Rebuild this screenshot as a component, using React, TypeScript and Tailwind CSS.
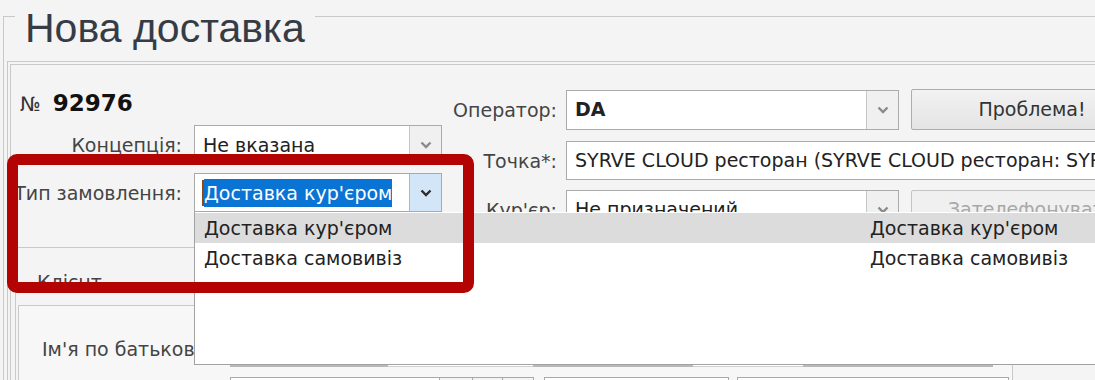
import React from "react";

function Chevron({ dark }: { dark?: boolean }) {
  return (
    <svg width="12" height="8" viewBox="0 0 12 8">
      <path
        d="M1.5 1.5 L6 6 L10.5 1.5"
        fill="none"
        stroke={dark ? "#2b2b2b" : "#8a8a8a"}
        strokeWidth="2.4"
      />
    </svg>
  );
}

function DropBtn({ focused }: { focused?: boolean }) {
  return (
    <div
      className={`w-[32px] shrink-0 border-l flex items-center justify-center ${
        focused ? "bg-[#d3e6f8] border-[#9fb8d3]" : "bg-[#f0f0f0] border-[#c6c6c6]"
      }`}
    >
      <Chevron dark={focused} />
    </div>
  );
}

export default function App() {
  const items = ["Доставка кур'єром", "Доставка самовивіз"];

  return (
    <div className="relative w-[1095px] h-[380px] overflow-hidden bg-[#f4f4f4] font-['DejaVu_Sans',sans-serif] text-[19px] text-[#222]">
      {/* outer group box */}
      <div className="ml-[3px] mt-[16px] h-[364px] border-l border-t border-[#c9c9c9]">
        <div className="ml-[11px] -mt-[9px] w-fit h-[40px] px-[10px] bg-[#f4f4f4] font-['Liberation_Sans',sans-serif] text-[41px] leading-[40px] text-[#363c46]">
          Нова доставка
        </div>

        <div className="ml-[3px] mt-[13px] h-[320px] border-l border-t border-[#c9c9c9]">
          <div className="ml-[2px] mt-[2px] h-[316px] border-l border-t border-[#c9c9c9]">
            {/* header section */}
            <div className="flex h-[182px]">
              {/* left column */}
              <div className="w-[439px] shrink-0 flex flex-col">
                <div className="ml-[9px] mt-[24px] h-[26px] flex items-baseline gap-[12px]">
                  <span className="text-[#333] text-[20px]">№</span>
                  <span className="font-bold text-[23px] leading-[26px] text-[#111]">92976</span>
                </div>
                <div className="mt-[10px] flex items-center">
                  <div className="w-[171px] text-right text-[#444] leading-[22px] whitespace-nowrap">Концепція:</div>
                  <div className="ml-[12px] w-[248px] h-[39px] flex border border-[#ababab] bg-white">
                    <div className="flex-1 pl-[8px] flex items-center leading-[22px]">Не вказана</div>
                    <DropBtn />
                  </div>
                </div>
                <div className="mt-[9px] flex items-center">
                  <div className="w-[171px] text-right text-[#444] leading-[22px] whitespace-nowrap">Тип замовлення:</div>
                  <div className="ml-[12px] w-[248px] h-[39px] flex border border-[#a9a9a9] bg-white">
                    <div className="flex-1 pl-[7px] flex items-center overflow-hidden">
                      <span className="w-[2px] h-[26px] shrink-0 bg-[#8a4a1a]" />
                      <span className="bg-[#0a74d4] text-white leading-[28px] whitespace-nowrap">Доставка кур'єром</span>
                    </div>
                    <DropBtn focused />
                  </div>
                </div>
              </div>

              {/* right column */}
              <div className="flex flex-col">
                <div className="mt-[24px] flex items-center">
                  <div className="w-[107px] text-right text-[#444] leading-[22px] whitespace-nowrap">Оператор:</div>
                  <div className="ml-[9px] w-[333px] h-[40px] flex border border-[#ababab] bg-white">
                    <div className="flex-1 pl-[8px] flex items-center font-bold text-[#222]">DA</div>
                    <DropBtn />
                  </div>
                  <div className="ml-[12px] w-[242px] h-[41px] shrink-0 border border-[#adadad] rounded-[2px] bg-gradient-to-b from-[#f2f2f2] to-[#e4e4e4] flex items-center justify-center text-[#333]">
                    Проблема!
                  </div>
                </div>
                <div className="mt-[11px] flex items-center">
                  <div className="w-[107px] text-right text-[#444] leading-[22px]">Точка*:</div>
                  <div className="ml-[9px] w-[640px] h-[39px] shrink-0 flex items-center border border-[#ababab] bg-white pl-[8px] whitespace-nowrap overflow-hidden">
                    SYRVE CLOUD ресторан (SYRVE CLOUD ресторан: SYRVE CLOUD)
                  </div>
                </div>
                <div className="mt-[10px] flex items-center">
                  <div className="w-[107px] text-right text-[#444] leading-[22px]">Кур'єр:</div>
                  <div className="ml-[9px] w-[333px] h-[39px] flex border border-[#ababab] bg-white">
                    <div className="flex-1 pl-[8px] flex items-center">Не призначений</div>
                    <DropBtn />
                  </div>
                  <div className="ml-[12px] w-[242px] h-[39px] shrink-0 border border-[#c4c4c4] rounded-[2px] bg-[#f0f0f0] flex items-center justify-center text-[#a8a8a8] whitespace-nowrap">
                    Зателефонувати
                  </div>
                </div>
              </div>
            </div>

            {/* client group */}
            <div className="ml-[4px] h-[134px] border-l border-t border-[#c9c9c9]">
              <div className="ml-[21px] mt-[23px] leading-[22px] text-[#444]">Клієнт</div>
              <div className="ml-[2px] mt-[12px] w-[995px] h-[80px] border-l border-t border-r border-[#c9c9c9] bg-[#f7f7f7]">
                <div className="mt-[25px] flex items-end h-[36px]">
                  <div className="w-[211px] pl-[23px] self-center text-[#444] leading-[22px] whitespace-nowrap">Ім'я по батькові</div>
                  <div className="w-[158px] h-[36px] bg-white border-b-[3px] border-[#b9b9b9]" />
                  <div className="w-[145px] h-[36px] bg-white border-b border-[#cfcfcf]" />
                  <div className="w-[160px] h-[36px] bg-white border-b-[3px] border-[#b9b9b9]" />
                  <div className="w-[110px] h-[36px] bg-white border-b border-[#cfcfcf]" />
                  <div className="w-[190px] h-[36px] bg-white border-b-[3px] border-[#b9b9b9]" />
                </div>
                <div className="mt-[10px] flex">
                  <div className="ml-[211px] w-[210px] h-[30px] border border-[#a9a9a9] bg-white" />
                  <div className="w-[33px] h-[30px] border-y border-r border-[#a9a9a9] bg-[#f4f4f4]" />
                  <div className="w-[30px] h-[30px] border-y border-r border-[#a9a9a9] bg-[#f4f4f4]" />
                  <div className="w-[31px] h-[30px] border-y border-r border-[#a9a9a9] bg-[#f4f4f4]" />
                  <div className="ml-[10px] w-[185px] h-[30px] border border-[#a9a9a9] bg-white" />
                  <div className="ml-[8px] w-[272px] h-[30px] border border-[#a9a9a9] bg-white" />
                </div>
              </div>
            </div>
          </div>
        </div>
      </div>

      {/* open dropdown list */}
      <div className="absolute left-[194px] top-[212px] w-[960px] h-[153px] bg-white border-l border-b border-[#a2a2a2]">
        {items.map((t, i) => (
          <div
            key={t}
            className={`h-[30px] flex items-center pl-[9px] whitespace-nowrap text-[#222] ${
              i === 0 ? "bg-[#dcdcdc] mt-[1px]" : ""
            }`}
          >
            <span className="w-[666px] shrink-0">{t}</span>
            <span>{t}</span>
          </div>
        ))}
      </div>

      {/* red highlight frame */}
      <div className="absolute left-[7px] top-[154px] w-[467px] h-[139px] border-[11px] border-[#b30404] rounded-[10px]" />
    </div>
  );
}
